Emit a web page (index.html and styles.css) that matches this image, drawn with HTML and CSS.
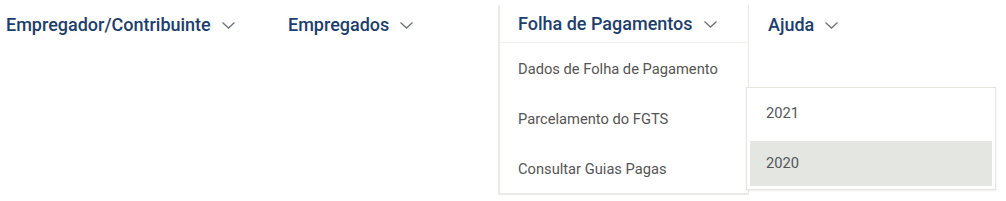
FILE: index.html
```html
<!DOCTYPE html>
<html>
<head>
    <title>Menu</title>
    <meta charset="utf-8">
    <link rel="stylesheet" href="styles.css">
</head>
<body>
    <div class="nav">
        <div class="nav-item first">
            <span class="label">Empregador/Contribuinte</span>
            <svg class="chev" width="13" height="7" viewBox="0 0 13 7"><path d="M0.5 0.5 L6.5 6 L12.5 0.5" fill="none" stroke="#6f737a" stroke-width="1.3"/></svg>
        </div>
        <div class="nav-item second">
            <span class="label">Empregados</span>
            <svg class="chev" width="13" height="7" viewBox="0 0 13 7"><path d="M0.5 0.5 L6.5 6 L12.5 0.5" fill="none" stroke="#6f737a" stroke-width="1.3"/></svg>
        </div>
        <div class="nav-item open">
            <div class="open-head">
                <span class="label">Folha de Pagamentos</span>
                <svg class="chev" width="13" height="7" viewBox="0 0 13 7"><path d="M0.5 0.5 L6.5 6 L12.5 0.5" fill="none" stroke="#6f737a" stroke-width="1.3"/></svg>
            </div>
            <div class="drop-item">Dados de Folha de Pagamento</div>
            <div class="drop-item">Parcelamento do FGTS</div>
            <div class="drop-item">Consultar Guias Pagas</div>

            <div class="submenu">
                <div class="sub-item">2021</div>
                <div class="sub-item active">2020</div>
            </div>
        </div>
        <div class="nav-item last">
            <span class="label">Ajuda</span>
            <svg class="chev" width="13" height="7" viewBox="0 0 13 7"><path d="M0.5 0.5 L6.5 6 L12.5 0.5" fill="none" stroke="#6f737a" stroke-width="1.3"/></svg>
        </div>
    </div>
</body>
</html>
```

FILE: styles.css
```css
* { margin: 0; padding: 0; box-sizing: border-box; }
body { font-family: Roboto, "Liberation Sans", sans-serif; background: #fff; }
.nav { display: flex; align-items: flex-start; padding-top: 5px; }
.nav-item { display: flex; align-items: center; height: 38px; color: #1c3e6e; font-size: 18px; font-weight: 500; }
.nav-item .chev { margin-left: 11px; margin-top: 2px; }
.nav-item.first { width: 268px; padding-left: 6px; }
.nav-item.second { width: 230px; padding-left: 20px; }
.nav-item.last { padding-left: 19px; }
.nav-item.open { display: block; position: relative; width: 251px; height: auto; border: 2px solid #ebebe5; border-top-width: 0; border-right-width: 1px; }
.open-head { display: flex; align-items: center; height: 38px; padding-left: 18px; border-bottom: 1px solid #f1f1ed; }
.open-head .chev { margin-left: 11px; margin-top: 2px; }
.drop-item { height: 50px; line-height: 52px; padding-left: 18px; font-size: 14.7px; font-weight: 400; color: #555; }
.submenu { position: absolute; left: 246px; top: 82px; width: 250px; padding: 3px; background: #fff; border: 1px solid #e6e6e0; box-shadow: 0 1px 2px rgba(0,0,0,0.08); display: flex; flex-direction: column; gap: 4px; }
.sub-item { height: 46px; line-height: 45px; padding-left: 16px; font-size: 14.7px; font-weight: 400; color: #555; }
.sub-item.active { background: #e4e6e1; height: 45px; }
```
